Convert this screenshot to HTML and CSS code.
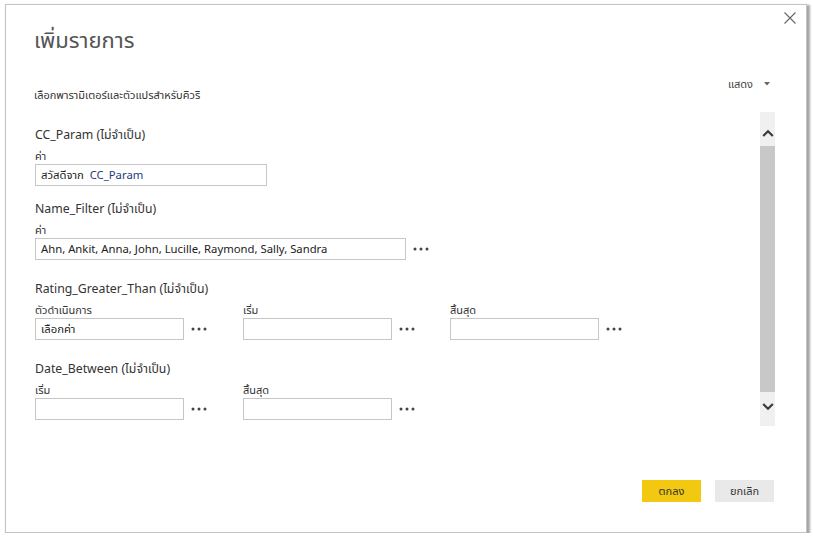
FILE: index.html
```html
<!DOCTYPE html>
<html lang="th">
<head>
<meta charset="utf-8">
<link rel="stylesheet" href="styles.css">
</head>
<body>
<div class="dialog">
  <div class="header">
    <h1 class="title">เพิ่มรายการ</h1>
    <svg class="close" width="12" height="12" viewBox="0 0 12 12"><path d="M0.5 0.5 L11.5 11.5 M11.5 0.5 L0.5 11.5" stroke="#666" stroke-width="1.1" fill="none"/></svg>
  </div>
  <div class="subrow">
    <span class="subtitle">เลือกพารามิเตอร์และตัวแปรสำหรับคิวริ</span>
    <span class="show">แสดง <svg class="caret" width="6" height="4" viewBox="0 0 6 4"><path d="M0 0 H6 L3 3.5 Z" fill="#666"/></svg></span>
  </div>
  <div class="body">
    <div class="form">
      <section class="group first">
        <div class="glabel">CC_Param (ไม่จำเป็น)</div>
        <div class="flabel">ค่า</div>
        <div class="row">
          <div class="input w231">สวัสดีจาก&nbsp; <span class="param">CC_Param</span></div>
        </div>
      </section>
      <section class="group">
        <div class="glabel">Name_Filter (ไม่จำเป็น)</div>
        <div class="flabel">ค่า</div>
        <div class="row">
          <div class="input w370">Ahn, Ankit, Anna, John, Lucille, Raymond, Sally, Sandra</div>
          <svg class="dots" width="16" height="4" viewBox="0 0 16 4"><circle cx="2" cy="2" r="1.5"/><circle cx="8" cy="2" r="1.5"/><circle cx="14" cy="2" r="1.5"/></svg>
        </div>
      </section>
      <section class="group">
        <div class="glabel">Rating_Greater_Than (ไม่จำเป็น)</div>
        <div class="cols">
          <div class="col">
            <div class="flabel">ตัวดำเนินการ</div>
            <div class="row"><div class="input w149">เลือกค่า</div><svg class="dots" width="16" height="4" viewBox="0 0 16 4"><circle cx="2" cy="2" r="1.5"/><circle cx="8" cy="2" r="1.5"/><circle cx="14" cy="2" r="1.5"/></svg></div>
          </div>
          <div class="col">
            <div class="flabel">เริ่ม</div>
            <div class="row"><div class="input w149"></div><svg class="dots" width="16" height="4" viewBox="0 0 16 4"><circle cx="2" cy="2" r="1.5"/><circle cx="8" cy="2" r="1.5"/><circle cx="14" cy="2" r="1.5"/></svg></div>
          </div>
          <div class="col">
            <div class="flabel">สิ้นสุด</div>
            <div class="row"><div class="input w149"></div><svg class="dots" width="16" height="4" viewBox="0 0 16 4"><circle cx="2" cy="2" r="1.5"/><circle cx="8" cy="2" r="1.5"/><circle cx="14" cy="2" r="1.5"/></svg></div>
          </div>
        </div>
      </section>
      <section class="group">
        <div class="glabel">Date_Between (ไม่จำเป็น)</div>
        <div class="cols">
          <div class="col">
            <div class="flabel">เริ่ม</div>
            <div class="row"><div class="input w149"></div><svg class="dots" width="16" height="4" viewBox="0 0 16 4"><circle cx="2" cy="2" r="1.5"/><circle cx="8" cy="2" r="1.5"/><circle cx="14" cy="2" r="1.5"/></svg></div>
          </div>
          <div class="col">
            <div class="flabel">สิ้นสุด</div>
            <div class="row"><div class="input w149"></div><svg class="dots" width="16" height="4" viewBox="0 0 16 4"><circle cx="2" cy="2" r="1.5"/><circle cx="8" cy="2" r="1.5"/><circle cx="14" cy="2" r="1.5"/></svg></div>
          </div>
        </div>
      </section>
    </div>
    <div class="scrollbar">
      <div class="sbtn up"><svg width="12" height="8" viewBox="0 0 12 8"><path d="M1.2 7 L6 2.2 L10.8 7" stroke="#3a3a3a" stroke-width="2.2" fill="none"/></svg></div>
      <div class="thumb"></div>
      <div class="sbtn down"><svg width="12" height="8" viewBox="0 0 12 8"><path d="M1.2 1 L6 5.8 L10.8 1" stroke="#3a3a3a" stroke-width="2.2" fill="none"/></svg></div>
    </div>
  </div>
  <div class="footer">
    <button class="btn ok">ตกลง</button>
    <button class="btn cancel">ยกเลิก</button>
  </div>
</div>
</body>
</html>
```

FILE: styles.css
```css
* { box-sizing: border-box; }
html, body { margin: 0; padding: 0; background: #fff; }
body {
  font-family: "Segoe UI", "Noto Sans", "Noto Sans Thai", "DejaVu Sans", sans-serif;
  color: #333;
}
.dialog {
  margin: 4px 0 0 5px;
  width: 802px;
  height: 529px;
  border: 1px solid #c3c3c3;
  box-shadow: 2px 2px 2px 1px rgba(0,0,0,0.35);
  background: #fff;
  display: flex;
  flex-direction: column;
}
.header {
  display: flex;
  justify-content: space-between;
  align-items: flex-start;
  padding: 6px 10px 0 28px;
}
.title {
  margin: 13px 0 0 0;
  font-size: 22px;
  font-weight: normal;
  color: #555;
  line-height: 30px;
}
.close { margin-top: 1px; }
.subrow {
  display: flex;
  justify-content: space-between;
  align-items: flex-end;
  padding: 0 36px 0 28px;
  margin-top: 10px;
  height: 38px;
}
.subtitle { font-size: 11px; line-height: 14px; }
.show {
  font-size: 11px;
  line-height: 14px;
  color: #444;
  align-self: flex-start;
  margin-top: 13px;
  display: flex;
  align-items: center;
  gap: 11px;
}
.caret { display: block; }
.body {
  display: flex;
  margin-top: 10px;
  padding-right: 31px;
}
.form { flex: 1; padding-left: 29px; padding-top: 14px; }
.scrollbar {
  width: 15px;
  height: 314px;
  display: flex;
  flex-direction: column;
}
.sbtn {
  height: 34px;
  background: #f0f0f0;
  display: flex;
  align-items: center;
  justify-content: center;
}
.sbtn.up { padding-top: 8px; }
.sbtn.down { padding-bottom: 4px; }
.thumb { flex: 1; background: #c8c8c8; }
.group { margin-bottom: 20px; }
.group.first { margin-bottom: 14px; }
.glabel { font-size: 12.3px; line-height: 18px; color: #333; }
.flabel { font-size: 11px; line-height: 14px; margin-top: 5px; margin-bottom: 1px; color: #333; }
.row { display: flex; align-items: center; }
.input {
  height: 22px;
  border: 1px solid #c6c6c6;
  font-size: 11.3px;
  line-height: 20px;
  padding: 0 5px;
  color: #222;
  white-space: nowrap;
  overflow: hidden;
}
.param { color: #1f3a7a; }
.w231 { width: 232px; }
.w370 { width: 371px; }
.w149 { width: 149px; }
.dots {
  fill: #444;
  margin-left: 7px;
  display: block;
}
.cols { display: flex; }
.col { width: 208px; }
.col + .col + .col { margin-left: -1px; }
.footer {
  margin-top: auto;
  display: flex;
  justify-content: flex-end;
  gap: 14px;
  padding: 0 32px 30px 0;
}
.btn {
  width: 59px;
  height: 22px;
  border: none;
  font-family: inherit;
  font-size: 11px;
  color: #333;
  padding: 0;
}
.ok { background: #f2c811; }
.cancel { background: #e9e9e9; }
```
